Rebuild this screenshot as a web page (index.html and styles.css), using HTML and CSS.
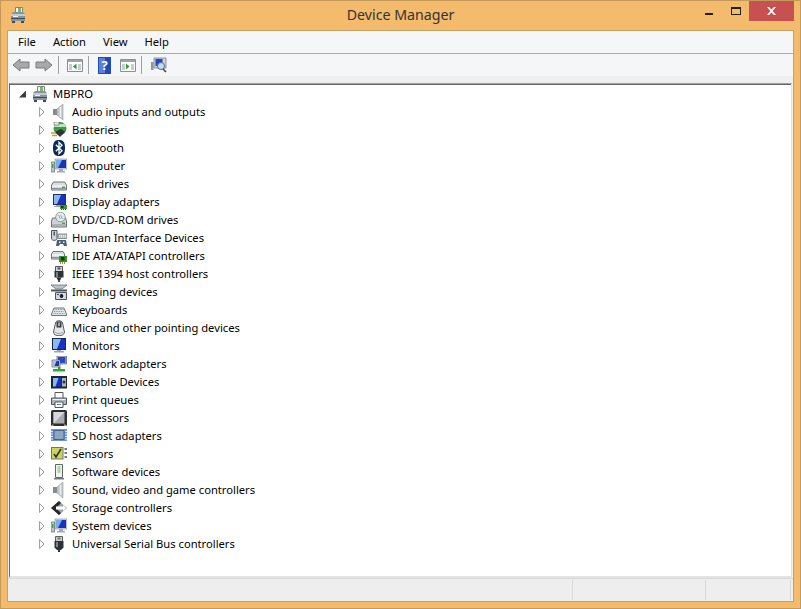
FILE: index.html
```html
<!DOCTYPE html>
<html lang="en">
<head>
<meta charset="utf-8">
<title>Device Manager</title>
<link rel="stylesheet" href="styles.css">
</head>
<body>
<svg class="defs" width="0" height="0" aria-hidden="true">
  <defs>
    <symbol id="tri" viewBox="0 0 7 10"><path d="M1.500 .5 L6 5 L1.500 9.500 Z" fill="#fff" stroke="#a0a0a0"/></symbol>
    <symbol id="host" viewBox="0 0 16 16">
      <path d="M5.500 .5h7v7h-7z" fill="#f6f6f6" stroke="#7d8388"/><path d="M8 1h3v5H8z" fill="#7db863"/>
      <path d="M1 7l2-2h10l2 2v7H1z" fill="#87939e"/><path d="M1 7h14v2H1z" fill="#c4ccd2"/><path d="M1 11h14v1H1z" fill="#3e4a54"/><path d="M2 14h3v2H2zM11 14h3v2h-3z" fill="#3e4a54"/><path d="M3 9h5v1H3z" fill="#eef1f3"/>
    </symbol>
    <symbol id="speaker" viewBox="0 0 16 16">
      <path d="M2 5h4v6H2z" fill="#83898d"/><path d="M6 5l6-5v16l-6-5z" fill="#c2c7ca" stroke="#989da0" stroke-width=".6"/><path d="M9.500 3v10" stroke="#eceeef" stroke-width="1.500"/>
    </symbol>
    <symbol id="battery" viewBox="0 0 16 16">
      <circle cx="9" cy="6.500" r="6.500" fill="#3c9a48"/><path d="M4.500 2h9l1.500 3H3z" fill="#bfe6b8"/><path d="M4 10l6-3 4 3-5 5z" fill="#2f3438"/><path d="M0 11h5M1 13.500h5" stroke="#cf9f2e" stroke-width="1.300"/><path d="M3 0h5v3H3z" fill="#e8ebee" stroke="#666" stroke-width=".6"/>
    </symbol>
    <symbol id="bluetooth" viewBox="0 0 16 16">
      <path d="M8 0c4.500 0 6 2.500 6 8s-1.500 8-6 8-6-2.500-6-8 1.500-8 6-8z" fill="#0a2a5c"/><path d="M4.800 4.800l6.200 6-3 3V2.200l3 3-6.200 6" fill="none" stroke="#fff" stroke-width="1.300"/>
    </symbol>
    <symbol id="computer" viewBox="0 0 16 16">
      <path d="M0 4h3.500v10H0z" fill="#bfc6cb" stroke="#5f676d" stroke-width=".7"/><path d="M1 6h1.500v4H1z" fill="#3ea63e"/>
      <path d="M4 1h12v10H4z" fill="#d3d8dc" stroke="#80878c" stroke-width=".6"/><path d="M5 2h10v8H5z" fill="#1533c0"/><path d="M5 2h6l-4 8H5z" fill="#79acee"/><path d="M8 11h4v2H8zM6 13h8v1.500H6z" fill="#a4abb0"/>
    </symbol>
    <symbol id="disk" viewBox="0 0 16 16">
      <path d="M.5 9l2-3h11l2 3v5H.5z" fill="#d9dde0" stroke="#6f757a"/><path d="M1 10h14" stroke="#fff"/><path d="M1 12.500h14" stroke="#8e9498"/><path d="M11 10.500h3v1.500h-3z" fill="#46ad3c"/>
    </symbol>
    <symbol id="display" viewBox="0 0 16 16">
      <path d="M2 0h13v11H2z" fill="#232f5c"/><path d="M3 1h11v9H3z" fill="#1533c0"/><path d="M3 1h7l-4 9H3z" fill="#8ab9f0"/><path d="M5 11h5v1H5zM3 12h7v1H3z" fill="#a0a6ab"/><path d="M9 11h7v4H9z" fill="#3a963a"/><path d="M10 15h1v1h-1zM12 15h1v1h-1zM14 15h1v1h-1z" fill="#256025"/><path d="M10 12h2.500v2H10z" fill="#153f15"/>
    </symbol>
    <symbol id="dvd" viewBox="0 0 16 16">
      <path d="M.5 9l1-3h13l1 3v6H.5z" fill="#cfd3d7" stroke="#6f757a"/><path d="M1 13h14" stroke="#8a9094"/><path d="M11 10.500h3V12h-3z" fill="#46ad3c"/><circle cx="9.500" cy="5" r="4.800" fill="#e6ebee" stroke="#7d8388" stroke-width=".8"/><circle cx="9.500" cy="5" r="1.300" fill="#fff" stroke="#7d8388" stroke-width=".7"/><path d="M6.500 3l2 1M12.500 7l-2-1" stroke="#8fb8df"/>
    </symbol>
    <symbol id="hid" viewBox="0 0 16 16">
      <path d="M.5 .5h5.500v8c0 2.500-5.500 2.500-5.500 0z" fill="#cfd5d9" stroke="#4f575d"/><path d="M2.500 1.500h1.500v4H2.500z" fill="#4f5961"/><path d="M7 4h9v4.500H7z" fill="#bcc2c7" stroke="#5f676d" stroke-width=".7"/><path d="M8 5.500h7M8 7h7" stroke="#f0f1f2" stroke-dasharray="1 1"/><path d="M6 10h9l1 6h-3l-1-2H9l-1 2H5z" fill="#48607e"/><path d="M8 11.500h1.500V13H8zM12 11.500h1.500V13H12z" fill="#e6ecf3"/>
    </symbol>
    <symbol id="ide" viewBox="0 0 16 16">
      <path d="M.5 6l1.500-2.500h10L13.500 6v5H.5z" fill="#d9dde0" stroke="#6f757a"/><path d="M1 7h12" stroke="#fff"/><path d="M1 9.500h12" stroke="#8e9498"/><path d="M8 8h8v6H8z" fill="#338f33"/><path d="M10 9h3.500v3.500H10z" fill="#123f12"/><path d="M9 14h1v2H9zM11 14h1v2h-1zM13 14h1v2h-1z" fill="#ac8f3c"/>
    </symbol>
    <symbol id="firewire" viewBox="0 0 16 16">
      <path d="M4.500 .5h7v5h-7z" fill="#d6dade" stroke="#4f575d"/><path d="M6.500 1.500h3V3.500h-3z" fill="#4a5056"/><path d="M3.500 5h9v6.500h-9z" fill="#2e3236"/><path d="M5 6h2v5H5z" fill="#777d83"/><path d="M5.500 11.500h5L9 14.500H7z" fill="#26292c"/><path d="M7 14h2v2H7z" fill="#4a4f54"/>
    </symbol>
    <symbol id="imaging" viewBox="0 0 16 16">
      <path d="M0 1h16l-5 4H5z" fill="#bcc3c8" stroke="#5f676d" stroke-width=".7"/><path d="M0 5.500h16v2H0z" fill="#4a555c"/><path d="M4.500 8.500h11v7h-11z" fill="#d1d6da" stroke="#4f575d"/><circle cx="10.500" cy="12" r="2.500" fill="#15222f" stroke="#f5f6f7"/><path d="M6 10h2v1H6z" fill="#303c48"/>
    </symbol>
    <symbol id="keyboard" viewBox="0 0 16 16">
      <path d="M.5 12l2.500-6h10l2.500 6v1.500H.5z" fill="#e3e6e8" stroke="#6f757a"/><path d="M3.500 7.500h9M3 9.500h10M2.500 11.500h11" stroke="#8e9499" stroke-dasharray="1 .7"/>
    </symbol>
    <symbol id="mouse" viewBox="0 0 16 16">
      <path d="M4.500 3c0-3 7-3 7 0l2 9c0 5-11 5-11 0z" fill="#e3e6e9" stroke="#565d63"/><path d="M5.500 1.500h5v6h-5z" fill="#3a3f45"/><path d="M7.300 2.500h1.400v3.500H7.300z" fill="#d3d7da"/><path d="M4 12c2 2 6 2 8 0" stroke="#9ba0a5" fill="none"/>
    </symbol>
    <symbol id="monitor" viewBox="0 0 16 16">
      <path d="M1 0h14v12H1z" fill="#1a2655"/><path d="M2 1h12v10H2z" fill="#1533c0"/><path d="M2 1h8l-4 10H2z" fill="#8ab9f0"/><path d="M6 12h4v1H6zM3 13h10v1.500H3z" fill="#9ea4a9"/>
    </symbol>
    <symbol id="network" viewBox="0 0 16 16">
      <path d="M6 0h9.500v8H6z" fill="#c5ccd1" stroke="#4f5861" stroke-width=".7"/><path d="M7 1h7.500v6H7z" fill="#2449cc"/><path d="M1 4h8v7H1z" fill="#d9dde0" stroke="#4f5861" stroke-width=".7"/><path d="M2 5h6v5H2z" fill="#163abc"/><path d="M2 5h3.500l-2 5H2z" fill="#9cc4ef"/><path d="M7 11h2.500v2H7z" fill="#2fa62f"/><path d="M2 13h12v2.500H2z" fill="#2fa62f"/>
    </symbol>
    <symbol id="portable" viewBox="0 0 16 16">
      <path d="M0 2h16v12.500H0z" fill="#1e2631"/><path d="M2 4h8v8.500H2z" fill="#1533c0"/><path d="M2 4h5.500l-3 8.500H2z" fill="#8ab9f0"/><path d="M11 4h4v8.500h-4z" fill="#aeb4b8"/><circle cx="13" cy="8" r="1.500" fill="#2c3238"/>
    </symbol>
    <symbol id="printer" viewBox="0 0 16 16">
      <path d="M4 .5h8v6H4z" fill="#fff" stroke="#4f565c"/><path d="M.5 6h15v6.500H.5z" fill="#adb4b9" stroke="#4f565c"/><path d="M1.500 7.500h13" stroke="#eef0f1"/><path d="M4 10h8v5.500H4z" fill="#fff" stroke="#4f565c"/><path d="M6 12.500h4" stroke="#4f86c6"/>
    </symbol>
    <symbol id="cpu" viewBox="0 0 16 16">
      <rect width="16" height="16" rx="1.500" fill="#2c2f32"/><path d="M2.500 2h11v11.500h-11z" fill="#a9adb0"/><path d="M2.500 2h11L2.500 13.500z" fill="#d6d9db"/><path d="M13 14.500h2V16h-2zM1 14.500h1.500V16H1z" fill="#c99a2c"/>
    </symbol>
    <symbol id="sd" viewBox="0 0 16 16">
      <path d="M0 1h16v12H0z" fill="#7097cb"/><path d="M3 2.500h10v9H3z" fill="#8fa5c1" stroke="#3e6096"/><path d="M0 3.500h2M0 6h2M0 8.500h2M0 11h2M14 3.500h2M14 6h2M14 8.500h2M14 11h2" stroke="#d3e0f0"/>
    </symbol>
    <symbol id="sensor" viewBox="0 0 16 16">
      <path d="M0 1h12.500v12.500H0z" fill="#6f767c"/><path d="M1 2h10.500v10.500H1z" fill="#cfd25c"/><path d="M3 8l2 3 5-8" fill="none" stroke="#2e3229" stroke-width="1.500"/><path d="M13.500 2h2.500v2h-2.500zM13.500 6h2.500v2h-2.500zM13.500 10h2.500v2h-2.500z" fill="#6f767c"/>
    </symbol>
    <symbol id="software" viewBox="0 0 16 16">
      <path d="M4.500 .5h7v13h-7z" fill="#f0f2f3" stroke="#5f666c"/><path d="M6.500 2h3v7h-3z" fill="#b3d69b"/><path d="M3 14h10v1.500H3z" fill="#747b81"/>
    </symbol>
    <symbol id="storage" viewBox="0 0 16 16">
      <path d="M8 1L0 8l8 7 8-7z" fill="#9ea4a9"/><path d="M8 1L0 8l8 7 2-2-5-5 5-5z" fill="#25292d"/><path d="M5 6.500h7V5l3 3-3 3V9.500H5z" fill="#fff"/>
    </symbol>
    <symbol id="usb" viewBox="0 0 16 16">
      <path d="M4.500 .5h7v5h-7z" fill="#c5cbcf" stroke="#565e64"/><path d="M6.500 1.500h3V3.500h-3z" fill="#70777d"/><path d="M3.500 5h9v6.500L10 14H6l-2.500-2.500z" fill="#2e3236"/><path d="M5 6h2v5H5z" fill="#7d8389"/><path d="M7 14h2v2H7z" fill="#2e3236"/>
    </symbol>
  </defs>
</svg>
<div class="window">
  <header class="titlebar">
    <svg class="app-icon" width="16" height="16"><use href="#host"/></svg>
    <h1 class="title">Device Manager</h1>
    <div class="controls">
      <div class="ctl"><span class="min"></span></div>
      <div class="ctl"><span class="max"></span></div>
      <div class="ctl close"><svg width="9" height="8" viewBox="0 0 9 8"><path d="M0 0h2L4.500 2.500 7 0h2L5.600 4 9 8H7L4.500 5.500 2 8H0l3.400-4z" fill="#fff"/></svg></div>
    </div>
  </header>
  <main class="client">
    <nav class="menubar">
      <span class="menu">File</span><span class="menu">Action</span><span class="menu">View</span><span class="menu">Help</span>
    </nav>
    <div class="toolbar">
      <svg class="tool t-back" width="18" height="16" viewBox="0 0 18 16"><path d="M1 8l7-6v3h9v6H8v3z" fill="#a8aaaa" stroke="#7a7a7a"/></svg>
      <svg class="tool t-next" width="18" height="16" viewBox="0 0 18 16"><path d="M17 8l-7-6v3H1v6h9v3z" fill="#a8aaaa" stroke="#7a7a7a"/></svg>
      <span class="sep s-1"></span>
      <svg class="tool t-pane" width="16" height="13" viewBox="0 0 16 13"><path d="M.5 .5h15v12H.5z" fill="#fff" stroke="#8a8f93"/><path d="M1 1h14v2H1z" fill="#9da4aa"/><path d="M2 5h3v6H2zM11 5h3v6h-3z" fill="#c5ccd2"/><path d="M9.500 4.500v6l-3.500-3z" fill="#2f9c2f"/></svg>
      <span class="sep s-2"></span>
      <svg class="tool t-help" width="13" height="17" viewBox="0 0 13 17"><path d="M0 0h13v17H0z" fill="#2349b4"/><path d="M1 1h6v15H1z" fill="#5c80d8"/><text x="6.500" y="13" class="help-q">?</text></svg>
      <svg class="tool t-pane2" width="16" height="13" viewBox="0 0 16 13"><path d="M.5 .5h15v12H.5z" fill="#fff" stroke="#8a8f93"/><path d="M1 1h14v2H1z" fill="#9da4aa"/><path d="M2 5h3v6H2zM11 5h3v6h-3z" fill="#c5ccd2"/><path d="M6 4.500v6l3.500-3z" fill="#2f9c2f"/></svg>
      <span class="sep s-3"></span>
      <svg class="tool t-scan" width="16" height="16" viewBox="0 0 16 16"><path d="M0 5h2.500v8H0z" fill="#8f969b"/><path d="M3 1h12v10H3z" fill="#cfd4d8" stroke="#6a7075" stroke-width=".7"/><path d="M4.500 2h7v7h-7z" fill="#2344c8"/><circle cx="10" cy="9" r="3.500" fill="#c5dcf3" stroke="#4c6f96"/><path d="M12 12l3 3" stroke="#444" stroke-width="1.600"/></svg>
    </div>
    <div class="gap"></div>
    <section class="tree">
      <div class="row root"><span class="expander open"></span><svg class="ico" width="16" height="16"><use href="#host"/></svg><span class="label">MBPRO</span></div>
      <div class="row"><svg class="tri" width="7" height="10"><use href="#tri"/></svg><svg class="ico" width="16" height="16"><use href="#speaker"/></svg><span class="label">Audio inputs and outputs</span></div>
      <div class="row"><svg class="tri" width="7" height="10"><use href="#tri"/></svg><svg class="ico" width="16" height="16"><use href="#battery"/></svg><span class="label">Batteries</span></div>
      <div class="row"><svg class="tri" width="7" height="10"><use href="#tri"/></svg><svg class="ico" width="16" height="16"><use href="#bluetooth"/></svg><span class="label">Bluetooth</span></div>
      <div class="row"><svg class="tri" width="7" height="10"><use href="#tri"/></svg><svg class="ico" width="16" height="16"><use href="#computer"/></svg><span class="label">Computer</span></div>
      <div class="row"><svg class="tri" width="7" height="10"><use href="#tri"/></svg><svg class="ico" width="16" height="16"><use href="#disk"/></svg><span class="label">Disk drives</span></div>
      <div class="row"><svg class="tri" width="7" height="10"><use href="#tri"/></svg><svg class="ico" width="16" height="16"><use href="#display"/></svg><span class="label">Display adapters</span></div>
      <div class="row"><svg class="tri" width="7" height="10"><use href="#tri"/></svg><svg class="ico" width="16" height="16"><use href="#dvd"/></svg><span class="label">DVD/CD-ROM drives</span></div>
      <div class="row"><svg class="tri" width="7" height="10"><use href="#tri"/></svg><svg class="ico" width="16" height="16"><use href="#hid"/></svg><span class="label">Human Interface Devices</span></div>
      <div class="row"><svg class="tri" width="7" height="10"><use href="#tri"/></svg><svg class="ico" width="16" height="16"><use href="#ide"/></svg><span class="label">IDE ATA/ATAPI controllers</span></div>
      <div class="row"><svg class="tri" width="7" height="10"><use href="#tri"/></svg><svg class="ico" width="16" height="16"><use href="#firewire"/></svg><span class="label">IEEE 1394 host controllers</span></div>
      <div class="row"><svg class="tri" width="7" height="10"><use href="#tri"/></svg><svg class="ico" width="16" height="16"><use href="#imaging"/></svg><span class="label">Imaging devices</span></div>
      <div class="row"><svg class="tri" width="7" height="10"><use href="#tri"/></svg><svg class="ico" width="16" height="16"><use href="#keyboard"/></svg><span class="label">Keyboards</span></div>
      <div class="row"><svg class="tri" width="7" height="10"><use href="#tri"/></svg><svg class="ico" width="16" height="16"><use href="#mouse"/></svg><span class="label">Mice and other pointing devices</span></div>
      <div class="row"><svg class="tri" width="7" height="10"><use href="#tri"/></svg><svg class="ico" width="16" height="16"><use href="#monitor"/></svg><span class="label">Monitors</span></div>
      <div class="row"><svg class="tri" width="7" height="10"><use href="#tri"/></svg><svg class="ico" width="16" height="16"><use href="#network"/></svg><span class="label">Network adapters</span></div>
      <div class="row"><svg class="tri" width="7" height="10"><use href="#tri"/></svg><svg class="ico" width="16" height="16"><use href="#portable"/></svg><span class="label">Portable Devices</span></div>
      <div class="row"><svg class="tri" width="7" height="10"><use href="#tri"/></svg><svg class="ico" width="16" height="16"><use href="#printer"/></svg><span class="label">Print queues</span></div>
      <div class="row"><svg class="tri" width="7" height="10"><use href="#tri"/></svg><svg class="ico" width="16" height="16"><use href="#cpu"/></svg><span class="label">Processors</span></div>
      <div class="row"><svg class="tri" width="7" height="10"><use href="#tri"/></svg><svg class="ico" width="16" height="16"><use href="#sd"/></svg><span class="label">SD host adapters</span></div>
      <div class="row"><svg class="tri" width="7" height="10"><use href="#tri"/></svg><svg class="ico" width="16" height="16"><use href="#sensor"/></svg><span class="label">Sensors</span></div>
      <div class="row"><svg class="tri" width="7" height="10"><use href="#tri"/></svg><svg class="ico" width="16" height="16"><use href="#software"/></svg><span class="label">Software devices</span></div>
      <div class="row"><svg class="tri" width="7" height="10"><use href="#tri"/></svg><svg class="ico" width="16" height="16"><use href="#speaker"/></svg><span class="label">Sound, video and game controllers</span></div>
      <div class="row"><svg class="tri" width="7" height="10"><use href="#tri"/></svg><svg class="ico" width="16" height="16"><use href="#storage"/></svg><span class="label">Storage controllers</span></div>
      <div class="row"><svg class="tri" width="7" height="10"><use href="#tri"/></svg><svg class="ico" width="16" height="16"><use href="#computer"/></svg><span class="label">System devices</span></div>
      <div class="row"><svg class="tri" width="7" height="10"><use href="#tri"/></svg><svg class="ico" width="16" height="16"><use href="#usb"/></svg><span class="label">Universal Serial Bus controllers</span></div>
    </section>
    <footer class="status">
      <div class="pane wide"></div>
      <div class="pane mid"></div>
      <div class="pane end"></div>
    </footer>
  </main>
</div>
</body>
</html>
```
FILE: styles.css
```css
* { box-sizing: border-box; }
html, body { margin: 0; height: 100%; overflow: hidden; }
body { font-family: "Noto Sans", "Open Sans", sans-serif; font-size: 11.2px; color: #000; }
.defs { position: absolute; }
.window {
  width: 801px; height: 609px;
  display: flex; flex-direction: column;
  background: #f4bb6c;
  border: 1px solid #c39a5c;
  padding: 0 6px 6px;
}
.titlebar { height: 29px; flex: none; display: flex; align-items: flex-start; position: relative; }
.app-icon { margin: 6px 0 0 3px; }
.title {
  position: absolute; left: 0; right: 0; top: 3px;
  margin: 0; text-align: center;
  font-weight: 400; font-size: 14.2px; line-height: 22px; color: #333;
}
.controls { margin-left: auto; display: flex; position: relative; }
.ctl { width: 27px; height: 20px; display: flex; align-items: center; justify-content: center; }
.ctl.close { width: 45px; background: #c75050; }
.min { width: 8px; height: 2px; background: #222; margin-top: 6px; }
.max { width: 10px; height: 8px; border: 1px solid #222; border-top-width: 2px; }
.client { flex: 1; min-height: 0; display: flex; flex-direction: column; background: #f0f0f0; border: 1px solid #c9a063; }
.menubar { height: 23px; flex: none; display: flex; align-items: center; padding-left: 1.5px; background: #f5f6f7; border-bottom: 1px solid #a9aaad; }
.menu { padding: 0 8.5px 2px; }
.toolbar { height: 22px; flex: none; display: flex; align-items: center; padding-left: 4px; background: #f5f6f7; }
.sep { width: 1px; height: 18px; background: #a0a0a0; }
.t-next { margin-left: 5px; }
.s-1 { margin-left: 5px; }
.t-pane { margin-left: 8px; }
.s-2 { margin-left: 5px; }
.t-help { margin-left: 9px; }
.t-pane2 { margin-left: 9px; }
.s-3 { margin-left: 5px; }
.t-scan { margin-left: 9px; }
.help-q { font-size: 13px; font-weight: 700; fill: #fff; text-anchor: middle; }
.gap { height: 7px; flex: none; background: #f0f0f0; }
.tree {
  flex: 1; min-height: 0; margin: 0 1px;
  padding-top: 1px;
  background: #fff;
  border-top: 1px solid #a0a0a0;
  border-left: 1px solid #696969;
  border-right: 1px solid #e3e3e3;
  border-bottom: 2px solid #e3e3e3;
  box-shadow: inset 0 1px 0 #696969;
}
.row { height: 18px; display: flex; align-items: center; padding-left: 28px; }
.row.root { padding-left: 9px; }
.tri { margin-right: 6px; }
.expander { width: 7px; height: 7px; margin-right: 6px; }
.expander.open { background: #3c3c3c; clip-path: polygon(100% 0, 100% 100%, 0 100%); }
.ico { margin-right: 5px; }
.label { margin-bottom: 2px; }
.status { height: 23px; flex: none; display: flex; background: #eee; border-top: 1px solid #d9d9d9; padding-top: 1px; }
.pane { border-right: 1px solid #d9d9d9; height: 20px; }
.wide { width: 565px; }
.mid { width: 133px; }
.end { width: 85px; }
```
